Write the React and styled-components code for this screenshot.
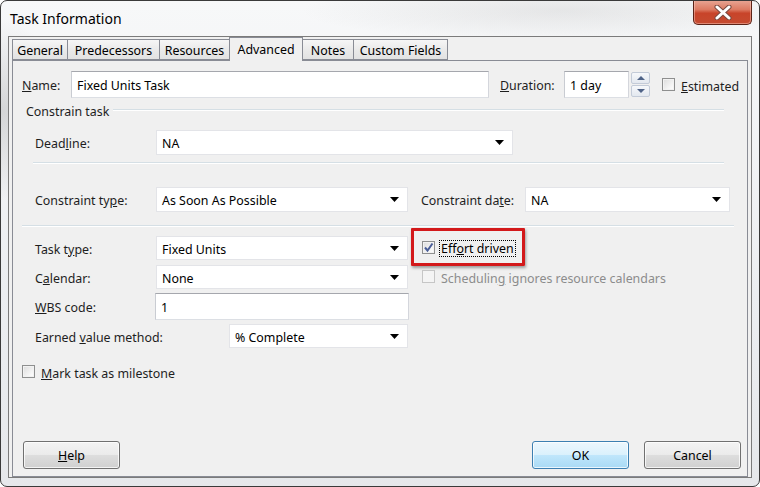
import React from 'react'
import styled, { createGlobalStyle } from 'styled-components'

const GlobalStyle = createGlobalStyle`
  html, body {
    margin: 0;
    padding: 0;
    background: #ffffff;
  }
  body {
    font-family: 'Noto Sans', 'Open Sans', sans-serif;
    font-size: 12.4px;
    color: #1e1e1e;
  }
  * {
    box-sizing: border-box;
  }
`

// window chrome
const Frame = styled.div`
  width: 760px;
  height: 487px;
  border: 1px solid #3a3a3a;
  border-radius: 7px;
  background:
    radial-gradient(ellipse 60px 90px at 2px 110px, rgba(120, 120, 120, 0.25), transparent),
    radial-gradient(ellipse 260px 30px at 560px 10px, rgba(150, 150, 150, 0.18), transparent),
    linear-gradient(to bottom, #f7f8f9, #eceef1 60%, #e6e8eb);
  display: flex;
  flex-direction: column;
  overflow: hidden;
`

const TitleBar = styled.div`
  height: 35px;
  display: flex;
  align-items: flex-start;
`

const Title = styled.div`
  margin: 8px 0 0 9px;
  font-size: 14px;
  line-height: 19px;
  color: #000;
`

const CloseButton = styled.div`
  margin: -1px 7px 0 auto;
  width: 59px;
  height: 25px;
  border: 1px solid #5c2317;
  border-top: none;
  border-radius: 0 0 5px 5px;
  background: linear-gradient(to bottom, #e8a796 0%, #dc7a62 40%, #c8442a 55%, #c54b30 100%);
  box-shadow: inset 0 0 0 1px rgba(255, 210, 200, 0.45);
  display: flex;
  align-items: center;
  justify-content: center;
`

const Client = styled.div`
  flex: 1;
  margin: 0 7px 8px 7px;
  border: 1px solid #7b7b7b;
  background: #f0f0f0;
  display: flex;
  flex-direction: column;
  padding: 0 3px;
`

// tabs
const TabStrip = styled.div`
  height: 23px;
  display: flex;
  align-items: flex-end;
  position: relative;
  z-index: 1;
`

const Tab = styled.div`
  width: ${(p) => p.$w}px;
  height: ${(p) => (p.$active ? 24 : 21)}px;
  margin-bottom: ${(p) => (p.$active ? -1 : 0)}px;
  margin-left: -1px;
  border: 1px solid #898c95;
  border-bottom: ${(p) => (p.$active ? 'none' : '1px solid #898c95')};
  background: ${(p) =>
    p.$active
      ? '#f0f0f0'
      : 'linear-gradient(to bottom, #f6f6f6, #eaeaea 50%, #e2e2e2)'};
  display: flex;
  align-items: center;
  justify-content: center;
  padding-top: 1px;
  padding-bottom: ${(p) => (p.$active ? 2 : 0)}px;
  color: #000;
  white-space: nowrap;

  &:first-child {
    margin-left: 0;
  }
`

const Panel = styled.div`
  flex: 1;
  border: 1px solid #898c95;
  background: #f0f0f0;
  display: flex;
  flex-direction: column;
  padding: 0 6px 7px 0;
`

// form pieces
const Row = styled.div`
  display: flex;
  align-items: center;
  height: ${(p) => p.$h || 24}px;
  margin-top: ${(p) => p.$top || 0}px;
  padding-left: ${(p) => p.$indent || 0}px;
`

const Label = styled.div`
  width: ${(p) => (p.$w ? `${p.$w}px` : 'auto')};
  margin-left: ${(p) => p.$ml || 0}px;
  padding-top: ${(p) => p.$pt ?? 2}px;
  flex-shrink: 0;
  white-space: nowrap;
  color: ${(p) => (p.$disabled ? '#8c8c8c' : '#1e1e1e')};
`

const TextBox = styled.div`
  width: ${(p) => p.$w}px;
  height: 100%;
  background: #fff;
  border: 1px solid #abadb3;
  border-color: #a5a7ad #d4d6dc #dcdfe4 #c9ccd2;
  display: flex;
  align-items: center;
  padding: 2px 0 0 5px;
  flex-shrink: 0;
  color: #000;
`

const Combo = styled.div`
  width: ${(p) => p.$w}px;
  height: 100%;
  background: #fff;
  border: 1px solid #e3e4e8;
  display: flex;
  align-items: center;
  padding: 0 8px 0 5px;
  flex-shrink: 0;
  color: #000;
`

const ComboText = styled.span`
  flex: 1;
  padding-top: 2px;
`

const Spinner = styled.div`
  width: 19px;
  height: 100%;
  margin-left: 2px;
  display: flex;
  flex-direction: column;
  justify-content: space-between;
  padding: 1px 0;
`

const SpinButton = styled.div`
  height: 12px;
  border: 1px solid #c3cbd8;
  border-radius: 2px;
  background: linear-gradient(to bottom, #f6f8fb, #e3e8ef);
  display: flex;
  align-items: center;
  justify-content: center;
`

const Box = styled.div`
  width: 13px;
  height: 13px;
  flex-shrink: 0;
  border: 1px solid ${(p) => (p.$disabled ? '#c6c6c6' : '#8e8f8f')};
  background: ${(p) =>
    p.$disabled ? '#f4f4f4' : 'linear-gradient(135deg, #dcdcdc, #f6f6f6 70%, #ffffff)'};
  box-shadow: inset 0 0 0 1px ${(p) => (p.$disabled ? '#f4f4f4' : '#f2f2f2')};
  display: flex;
  align-items: center;
  justify-content: center;
`

const GroupHeader = styled.div`
  display: flex;
  align-items: center;
  height: 16px;
  margin-top: 4px;
  padding-left: 13px;
  padding-right: 17px;
`

const GroupLine = styled.div`
  flex: 1;
  margin-left: 4px;
  border-top: 1px solid #d5dfe5;
  border-bottom: 1px solid #ffffff;
`

const Separator = styled.div`
  margin: ${(p) => p.$top}px ${(p) => p.$right}px 0 ${(p) => p.$left}px;
  border-top: 1px solid #d5dfe5;
  border-bottom: 1px solid #ffffff;
`

const Lower = styled.div`
  display: flex;
  align-items: flex-start;
`

const LeftColumn = styled.div`
  display: flex;
  flex-direction: column;
  padding-left: 22px;
`

const RightColumn = styled.div`
  display: flex;
  flex-direction: column;
  margin-left: 2px;
`

const Highlight = styled.div`
  margin-top: 1px;
  width: 114px;
  height: 38px;
  border: 3px solid #d3191b;
  border-radius: 1px;
  box-shadow: 1px 2px 3px rgba(0, 0, 0, 0.35);
  display: flex;
  align-items: center;
  padding-left: 8px;
`

const FocusText = styled.span`
  margin: 2px 0 0 5px;
  padding: 0 1px;
  outline: 1px dotted #000;
  line-height: 15px;
  color: #000;
`

const ButtonRow = styled.div`
  margin-top: auto;
  display: flex;
  align-items: center;
  padding-left: 10px;
`

const Button = styled.div`
  width: 97px;
  height: 28px;
  margin-left: ${(p) => p.$ml || 0}px;
  border: 1px solid ${(p) => (p.$primary ? '#3c7fb1' : '#707070')};
  border-radius: 3px;
  background: ${(p) =>
    p.$primary
      ? 'linear-gradient(to bottom, #ecf7fd 0%, #dbf1fc 48%, #bfe6fb 52%, #a9daf5 100%)'
      : 'linear-gradient(to bottom, #f3f3f3 0%, #ebebeb 48%, #dddddd 52%, #d0d0d0 100%)'};
  box-shadow: inset 0 0 0 1px rgba(255, 255, 255, 0.75);
  display: flex;
  align-items: center;
  justify-content: center;
  padding-top: 1px;
  color: #000;
`

const Spacer = styled.div`
  flex: 1;
`

const Arrow = () => (
  <svg width='9' height='5' viewBox='0 0 9 5'>
    <path d='M0 0 H9 L4.5 5 Z' fill='#000' />
  </svg>
)

const Check = () => (
  <svg width='11' height='11' viewBox='0 0 11 11'>
    <path d='M2 5.5 L4.5 8.5 L9.5 1.5' fill='none' stroke='#4a5e98' strokeWidth='2' />
  </svg>
)

const SpinArrow = ({ up }) => (
  <svg width='8' height='4' viewBox='0 0 8 4'>
    <path d={up ? 'M0 4 L4 0 L8 4 Z' : 'M0 0 H8 L4 4 Z'} fill='#4f6387' />
  </svg>
)

const Select = ({ w, value }) => (
  <Combo $w={w}>
    <ComboText>{value}</ComboText>
    <Arrow />
  </Combo>
)

const tabs = [
  { name: 'General', w: 56 },
  { name: 'Predecessors', w: 93 },
  { name: 'Resources', w: 71 },
  { name: 'Advanced', w: 74, active: true },
  { name: 'Notes', w: 52 },
  { name: 'Custom Fields', w: 95 }
]

const App = () => {
  return (
    <>
      <GlobalStyle />
      <Frame>
        <TitleBar>
          <Title>Task Information</Title>
          <CloseButton>
            <svg width='20' height='15' viewBox='0 0 20 15'>
              <path d='M4 2 L16 13 M16 2 L4 13' stroke='#7a4a40' strokeWidth='5' strokeLinecap='round' />
              <path d='M4 2 L16 13 M16 2 L4 13' stroke='#ffffff' strokeWidth='3' strokeLinecap='round' />
            </svg>
          </CloseButton>
        </TitleBar>

        <Client>
          <TabStrip>
            {tabs.map((t) => (
              <Tab key={t.name} $w={t.w} $active={t.active}>
                {t.name}
              </Tab>
            ))}
          </TabStrip>

          <Panel>
            <Row $top={10} $indent={9} $h={27}>
              <Label $w={49}>
                <u>N</u>ame:
              </Label>
              <TextBox $w={418}>Fixed Units Task</TextBox>
              <Label $w={64} $ml={11}>
                <u>D</u>uration:
              </Label>
              <TextBox $w={65}>1 day</TextBox>
              <Spinner>
                <SpinButton>
                  <SpinArrow up />
                </SpinButton>
                <SpinButton>
                  <SpinArrow />
                </SpinButton>
              </Spinner>
              <Row $indent={12} $h={13}>
                <Box />
                <Label $ml={6} $pt={4}>
                  <u>E</u>stimated
                </Label>
              </Row>
            </Row>

            <GroupHeader>
              <Label>Constrain task</Label>
              <GroupLine />
            </GroupHeader>

            <Row $top={12} $indent={22} $h={25}>
              <Label $w={121}>
                Dead<u>l</u>ine:
              </Label>
              <Select w={357} value='NA' />
            </Row>

            <Separator $top={7} $left={20} $right={17} />

            <Row $top={23} $indent={22} $h={25}>
              <Label $w={121}>
                Constraint ty<u>p</u>e:
              </Label>
              <Select w={252} value='As Soon As Possible' />
              <Label $w={104} $ml={13}>
                Constraint da<u>t</u>e:
              </Label>
              <Select w={205} value='NA' />
            </Row>

            <Separator $top={13} $left={9} $right={7} />

            <Lower>
              <LeftColumn>
                <Row $top={9}>
                  <Label $w={121}>
                    Task t<u>y</u>pe:
                  </Label>
                  <Select w={252} value='Fixed Units' />
                </Row>
                <Row $top={5}>
                  <Label $w={121}>
                    C<u>a</u>lendar:
                  </Label>
                  <Select w={252} value='None' />
                </Row>
                <Row $top={4} $h={27}>
                  <Label $w={120}>
                    <u>W</u>BS code:
                  </Label>
                  <TextBox $w={254}>1</TextBox>
                </Row>
                <Row $top={4}>
                  <Label $w={194}>
                    Earned <u>v</u>alue method:
                  </Label>
                  <Select w={179} value='% Complete' />
                </Row>
              </LeftColumn>

              <RightColumn>
                <Highlight>
                  <Box>
                    <Check />
                  </Box>
                  <FocusText>
                    Eff<u>o</u>rt driven
                  </FocusText>
                </Highlight>
                <Row $top={4} $indent={11} $h={13}>
                  <Box $disabled />
                  <Label $ml={6} $pt={4} $disabled>
                    Schedulin<u>g</u> ignores resource calendars
                  </Label>
                </Row>
              </RightColumn>
            </Lower>

            <Row $top={16} $indent={9} $h={14}>
              <Box />
              <Label $ml={6} $pt={4}>
                <u>M</u>ark task as milestone
              </Label>
            </Row>

            <ButtonRow>
              <Button>
                <span>
                  <u>H</u>elp
                </span>
              </Button>
              <Spacer />
              <Button $primary>OK</Button>
              <Button $ml={15}>Cancel</Button>
            </ButtonRow>
          </Panel>
        </Client>
      </Frame>
    </>
  )
}

export default App
